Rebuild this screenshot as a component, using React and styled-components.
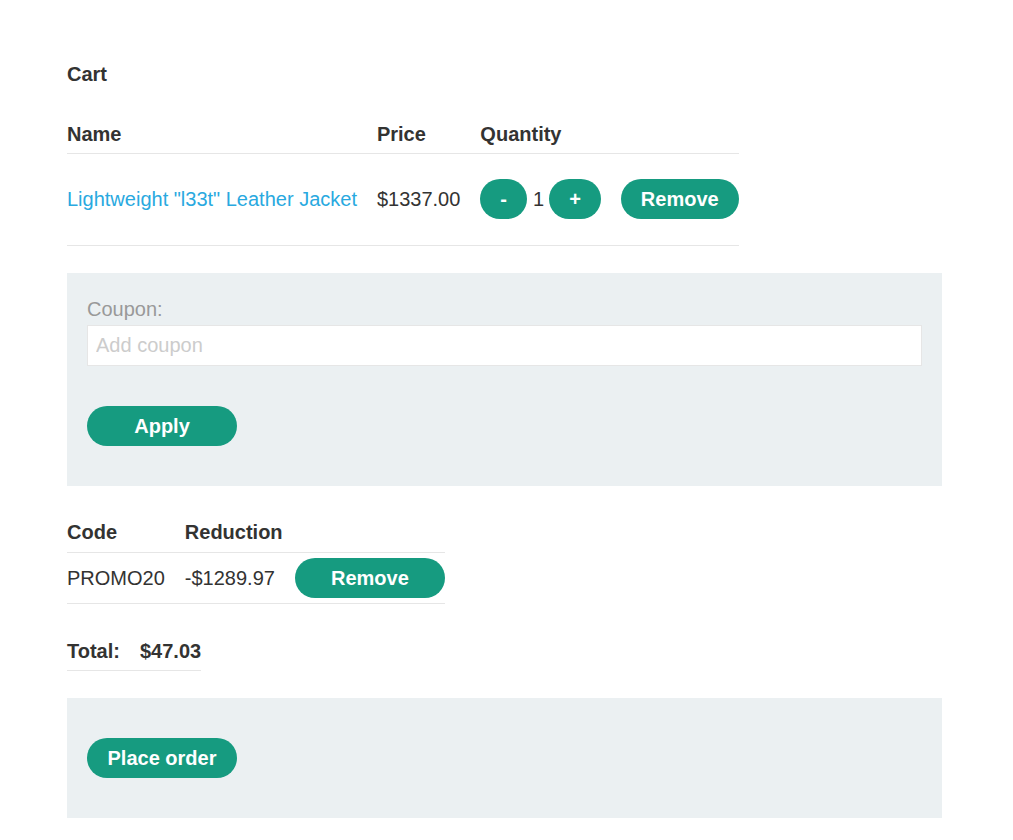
import React from "react";
import styled, { createGlobalStyle } from "styled-components";

const colors = {
	text: "#333332",
	link: "#29a9e0",
	green: "#169b80",
	panel: "#ebf0f2",
	rule: "#e6e6e6",
	label: "#999999",
	placeholder: "#cccccc",
};

const GlobalStyle = createGlobalStyle`
	body {
		margin: 0;
		background: #ffffff;
		color: ${ colors.text };
		font-family: "Liberation Sans", Arial, Helvetica, sans-serif;
		font-size: 20px;
	}
`;

const Page = styled.main`
	width: 875px;
	padding: 62px 0 22px 67px;
`;

const Heading = styled.h2`
	margin: 0 0 36px;
	font-size: 20px;
	line-height: 24px;
	font-weight: 700;
`;

// Header cells carry no right padding; body cells keep 20px between columns.
const Table = styled.table`
	border-collapse: collapse;
	border-spacing: 0;
	margin-bottom: ${ props => props.gapBelow || 0 }px;

	th {
		text-align: left;
		font-weight: 700;
		line-height: 24px;
		padding: 0 0 ${ props => props.headPad || 7 }px 0;
		border-bottom: 1px solid ${ colors.rule };
		white-space: nowrap;
	}

	td {
		line-height: 24px;
		padding: ${ props => props.cellPad || "5px 20px 5px 0" };
		border-bottom: 1px solid ${ colors.rule };
		vertical-align: middle;
		white-space: nowrap;
	}

	td:last-child {
		padding-right: 0;
	}
`;

const TotalCell = styled.td`
	&& {
		font-weight: 700;
		padding: 0 20px 7px 0;
	}

	&&:last-child {
		padding-right: 0;
	}
`;

const ProductLink = styled.a`
	color: ${ colors.link };
	text-decoration: none;
	cursor: pointer;
`;

const Quantity = styled.div`
	display: flex;
	align-items: center;
`;

const Count = styled.span`
	margin: 0 5px 0 6px;
`;

const Button = styled.button`
	height: 40px;
	min-width: ${ props => props.wide ? "150px" : "0" };
	padding: 0 20px;
	border: 0;
	border-radius: 20px;
	background: ${ colors.green };
	color: #ffffff;
	font-family: inherit;
	font-size: 20px;
	font-weight: 700;
	line-height: 40px;
	cursor: pointer;
`;

const Panel = styled.section`
	background: ${ colors.panel };
	padding: ${ props => props.padding };
	margin-bottom: ${ props => props.gapBelow || 0 }px;
`;

const Label = styled.label`
	display: block;
	color: ${ colors.label };
	line-height: 32px;
`;

const Input = styled.input`
	display: block;
	box-sizing: border-box;
	width: 100%;
	height: 41px;
	margin: 0 0 40px;
	padding: 0 8px;
	border: 1px solid ${ colors.rule };
	background: #ffffff;
	color: ${ colors.text };
	font-family: inherit;
	font-size: 20px;
	outline: none;

	&::placeholder {
		color: ${ colors.placeholder };
	}
`;

export default function App() {
	return (
		<Page>
			<GlobalStyle />
			<Heading>Cart</Heading>

			<Table gapBelow={ 27 } cellPad="25px 20px 26px 0">
				<thead>
					<tr>
						<th>Name</th>
						<th>Price</th>
						<th>Quantity</th>
						<th></th>
					</tr>
				</thead>
				<tbody>
					<tr>
						<td><ProductLink>Lightweight "l33t" Leather Jacket</ProductLink></td>
						<td>$1337.00</td>
						<td>
							<Quantity>
								<Button>-</Button>
								<Count>1</Count>
								<Button>+</Button>
							</Quantity>
						</td>
						<td><Button>Remove</Button></td>
					</tr>
				</tbody>
			</Table>

			<Panel padding="20px 20px 40px" gapBelow={ 34 }>
				<Label htmlFor="coupon">Coupon:</Label>
				<Input id="coupon" placeholder="Add coupon" />
				<Button wide>Apply</Button>
			</Panel>

			<Table gapBelow={ 35 } headPad={ 8 }>
				<thead>
					<tr>
						<th>Code</th>
						<th>Reduction</th>
						<th></th>
					</tr>
				</thead>
				<tbody>
					<tr>
						<td>PROMO20</td>
						<td>-$1289.97</td>
						<td><Button wide>Remove</Button></td>
					</tr>
				</tbody>
			</Table>

			<Table gapBelow={ 27 }>
				<tbody>
					<tr>
						<TotalCell>Total:</TotalCell>
						<TotalCell>$47.03</TotalCell>
					</tr>
				</tbody>
			</Table>

			<Panel padding="40px 20px">
				<Button wide>Place order</Button>
			</Panel>
		</Page>
	);
}
